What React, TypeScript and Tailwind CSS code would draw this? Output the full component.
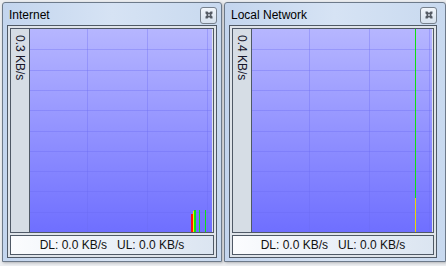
import React from "react";

const font = { fontFamily: '"Liberation Sans", Arial, sans-serif' };

type Bar = { x: number; w: number; top: number; color: string };

const rows = [1, 2, 3, 4, 5, 6, 7, 8, 9].map((k) => Math.round(k * 20.3) + 0.5);
const cols = [57.5, 117.5, 177.5];

const Graph = ({ width, bars }: { width: number; bars: Bar[] }) => (
  <svg width={width} height={203} className="block">
    <defs>
      <linearGradient id={`g${width}`} x1="0" y1="0" x2="0" y2="1">
        <stop offset="0" stopColor="#b6b6ff" />
        <stop offset="1" stopColor="#6f6fff" />
      </linearGradient>
    </defs>
    <rect width={width} height={203} fill={`url(#g${width})`} />
    {rows.map((y) => (
      <line key={y} x1={0} x2={width} y1={y} y2={y} stroke="#6a6af0" strokeOpacity={0.35} />
    ))}
    {cols.map((x) => (
      <line key={x} x1={x} x2={x} y1={0} y2={203} stroke="#6a6af0" strokeOpacity={0.35} />
    ))}
    {bars.map((b, i) => (
      <rect key={i} x={b.x} y={b.top} width={b.w} height={203 - b.top} fill={b.color} />
    ))}
  </svg>
);

const CloseButton = () => (
  <div className="w-[17px] h-[17px] rounded-[3px] border border-[#77818d] bg-gradient-to-b from-[#f2f6fb] to-[#d6e1ee] flex items-center justify-center">
    <svg width="8" height="8" viewBox="0 0 8 8">
      <path
        d="M0.5 0.5h2L4 2l1.5-1.5h2v2L6 4l1.5 1.5v2h-2L4 6 2.5 7.5h-2v-2L2 4 0.5 2.5z"
        fill="#555b64"
      />
      <rect x="3.2" y="3.2" width="1.6" height="1.6" fill="#e6edf5" />
    </svg>
  </div>
);

const NetWindow = ({
  title,
  scale,
  width,
  padRight,
  graphWidth,
  bars,
}: {
  title: string;
  scale: string;
  width: string;
  padRight: string;
  graphWidth: number;
  bars: Bar[];
}) => (
  <div
    className={`${width} h-[260px] border border-[#6d7a8a] rounded-t-[3px] bg-gradient-to-r from-[#c3d5ee] via-[#d6e3f4] to-[#c8d9ef] flex flex-col shadow-[1px_1px_3px_rgba(0,0,0,0.25)]`}
  >
    <div className={`h-[22px] flex items-center justify-between pl-[6px] ${padRight} pt-[2px]`}>
      <span className="text-[12px] text-black leading-none" style={font}>
        {title}
      </span>
      <CloseButton />
    </div>
    <div className={`ml-[4px] ${padRight} h-[233px] flex`}>
      <div className="flex-1 border border-[#4f5966] bg-[#dfe4ea] p-[2px] flex flex-col gap-[2px]">
        <div className="h-[205px] border border-[#4f5966] flex">
          <div className="w-[19px] border-r border-[#4f5966] bg-[#d6dde5] flex justify-center pt-[6px]">
            <span
              className="text-[12px] text-[#141428] leading-none [writing-mode:vertical-rl]"
              style={font}
            >
              {scale}
            </span>
          </div>
          <Graph width={graphWidth} bars={bars} />
        </div>
        <div
          className="h-[20px] border border-[#4f5966] bg-gradient-to-r from-[#fbfcfe] to-[#dbe5f1] flex items-center justify-center gap-[10px] text-[12px] text-[#111]"
          style={font}
        >
          <span>DL: 0.0 KB/s</span>
          <span>UL: 0.0 KB/s</span>
        </div>
      </div>
    </div>
  </div>
);

export default function App() {
  return (
    <div className="w-[446px] h-[266px] bg-[#eceef1] flex pl-[2px] pt-[2px] gap-[2px] overflow-hidden">
      <NetWindow
        title="Internet"
        scale="0.3 KB/s"
        width="w-[220px]"
        padRight="pr-[4px]"
        graphWidth={182}
        bars={[
          { x: 161, w: 2, top: 185, color: "#ff1010" },
          { x: 163, w: 1, top: 182, color: "#f0f000" },
          { x: 164, w: 2, top: 181, color: "#10e010" },
          { x: 169, w: 1, top: 181, color: "#10e010" },
          { x: 175, w: 1, top: 181, color: "#10e010" },
        ]}
      />
      <NetWindow
        title="Local Network"
        scale="0.4 KB/s"
        width="w-[222px]"
        padRight="pr-[8px]"
        graphWidth={180}
        bars={[
          { x: 163, w: 1, top: 0, color: "#10e010" },
          { x: 163, w: 1, top: 169, color: "#e8d800" },
        ]}
      />
    </div>
  );
}
